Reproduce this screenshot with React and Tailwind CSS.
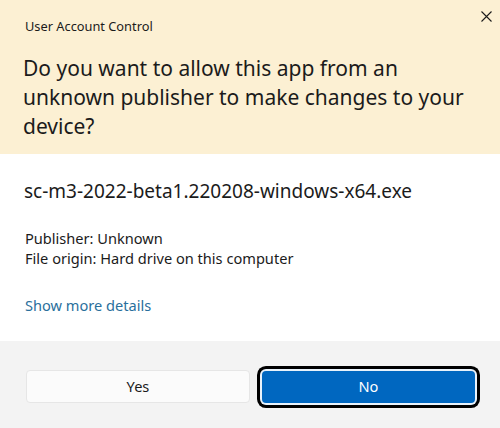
export default function App() {
  return (
    <div className="w-[500px] h-[428px] flex flex-col bg-white text-[#1b1b1b] overflow-hidden" style={{ fontFamily: '"Noto Sans", "Open Sans", sans-serif' }}>
      <div className="relative h-[154px] bg-[#fcf0d3] px-[23px] pt-[16px]">
        <div className="text-[12.8px] leading-[20px] pl-[2px]">User Account Control</div>
        <button className="absolute right-[8px] top-[11px] w-[11px] h-[11px] flex items-center justify-center">
          <svg width="11" height="11" viewBox="0 0 11 11" fill="none" stroke="#1b1b1b" strokeWidth="1.1">
            <path d="M0.5 0.5 L10.5 10.5 M10.5 0.5 L0.5 10.5" />
          </svg>
        </button>
        <div className="mt-[18px] text-[21px] leading-[29px]">
          Do you want to allow this app from an unknown publisher to make changes to your device?
        </div>
      </div>
      <div className="h-[187px] px-[24px] pt-[25px]">
        <div className="text-[19px] leading-[24px]">sc-m3-2022-beta1.220208-windows-x64.exe</div>
        <div className="mt-[25px] text-[14.6px] leading-[20px] pl-[1px]">
          <div>Publisher: Unknown</div>
          <div>File origin: Hard drive on this computer</div>
        </div>
        <div className="mt-[27px] text-[14.6px] leading-[20px] pl-[1px] text-[#2a6f9c]">Show more details</div>
      </div>
      <div className="flex-1 bg-[#f3f3f3] flex items-start pl-[26px] pt-[29px] gap-[12px]">
        <button className="w-[224px] h-[33px] rounded-[4px] bg-[#fbfbfb] border border-[#e6e6e6] text-[14.6px] text-[#1b1b1b]">Yes</button>
        <button className="w-[213px] h-[32px] mt-[1px] rounded-[4px] bg-[#0067c0] text-white text-[14.6px] ring-[3px] ring-black ring-offset-2 ring-offset-[#e8f2fb]">No</button>
      </div>
    </div>
  );
}
